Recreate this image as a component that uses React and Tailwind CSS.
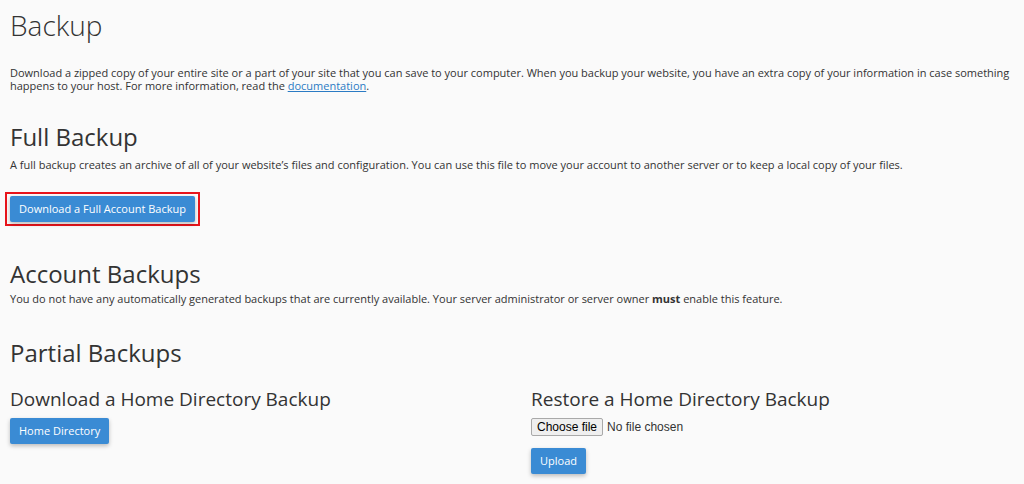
import React from 'react';

const Btn = ({ children, className = '' }) => (
  <button className={`h-[26px] px-[9px] bg-[#3a8bd4] text-white text-[11px] leading-[26px] rounded-[2px] shadow-[0_2px_4px_rgba(0,0,0,0.25)] whitespace-nowrap ${className}`}>
    {children}
  </button>
);

const App = () => {
  return (
    <div className="w-[1024px] h-[484px] overflow-hidden bg-[#fafafa] text-[#333] pl-[10px] pr-[10px] font-['Open_Sans',sans-serif]">
      <h1 className="mt-[7px] text-[28px] leading-[36px] font-light">Backup</h1>
      <p className="mt-[23px] text-[11px] leading-[13px]">
        Download a zipped copy of your entire site or a part of your site that you can save to your computer. When you backup your website, you have an extra copy of your information in case something happens to your host. For more information, read the{' '}
        <a href="#" className="text-[#2b7bc4] underline">documentation</a>.
      </p>

      <h2 className="mt-[30px] text-[24px] leading-[30px]">Full Backup</h2>
      <p className="mt-[5px] text-[11px] leading-[16px]">
        A full backup creates an archive of all of your website’s files and configuration. You can use this file to move your account to another server or to keep a local copy of your files.
      </p>
      <div className="mt-[19px] -ml-[5px] inline-block border-2 border-[#e8141b] px-[3px] py-[2px]">
        <Btn className="w-[185px] block">Download a Full Account Backup</Btn>
      </div>

      <h2 className="mt-[33px] text-[24px] leading-[30px]">Account Backups</h2>
      <p className="mt-[2px] text-[11px] leading-[16px]">
        You do not have any automatically generated backups that are currently available. Your server administrator or server owner <b className="font-bold">must</b> enable this feature.
      </p>

      <h2 className="mt-[31px] text-[24px] leading-[30px]">Partial Backups</h2>

      <div className="grid grid-cols-[521px_1fr]">
        <div>
          <h3 className="mt-[19px] text-[19px] leading-[24px]">Download a Home Directory Backup</h3>
          <Btn className="mt-[7px]">Home Directory</Btn>
        </div>
        <div>
          <h3 className="mt-[19px] text-[19px] leading-[24px]">Restore a Home Directory Backup</h3>
          <div className="mt-[7px] flex items-center h-[18px] font-['Liberation_Sans',Arial,sans-serif] text-[12px]">
            <span className="h-[18px] px-[5px] leading-[16px] bg-[#efefef] border border-[#a9a9a9] rounded-[2px] text-black">Choose file</span>
            <span className="ml-[4px] text-[#333]">No file chosen</span>
          </div>
          <Btn className="mt-[12px] block">Upload</Btn>
        </div>
      </div>
    </div>
  );
};

export default App;
